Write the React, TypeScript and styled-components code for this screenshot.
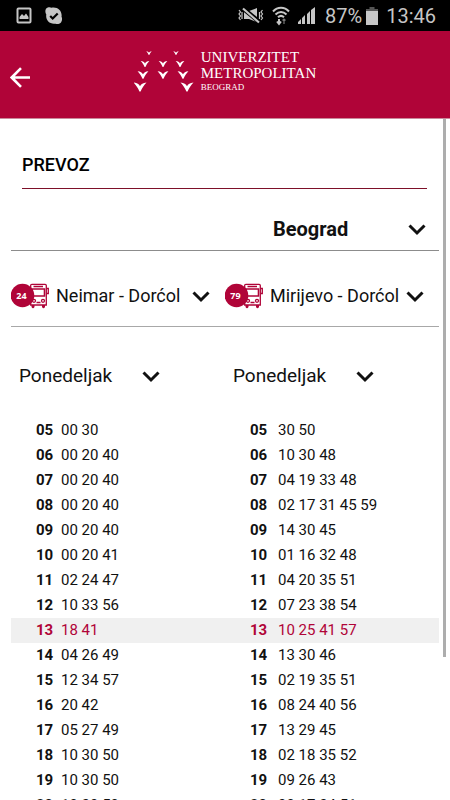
import React from "react";
import styled, { createGlobalStyle } from "styled-components";

const crimson = "#b00438";

const GlobalStyle = createGlobalStyle`
  * { box-sizing: border-box; }
  body {
    margin: 0;
    background: #fff;
    color: #111;
    font-family: Roboto, "Liberation Sans", sans-serif;
  }
`;

const Screen = styled.div`
  display: flex;
  flex-direction: column;
  height: 100vh;
  overflow: hidden;
`;

const StatusBar = styled.div`
  flex: none;
  display: flex;
  align-items: center;
  justify-content: space-between;
  height: 31px;
  padding: 0 14px 0 16px;
  background: #000;
  color: #c6c6c6;
  font-size: 20px;
  line-height: 24px;
`;

const StatusGroup = styled.div<{ $gap: number }>`
  display: flex;
  align-items: center;
  gap: ${(p) => p.$gap}px;
`;

const Clock = styled.time`
  margin-left: 4px;
`;

const Header = styled.header`
  flex: none;
  display: grid;
  grid-template-columns: 1fr auto 1fr;
  align-items: center;
  height: 88px;
  padding: 0 10px;
  background: ${crimson};
  border-bottom: 1px solid #c98a9b;
  color: #fff;
`;

const BackButton = styled.button`
  display: flex;
  justify-self: start;
  margin-top: 6px;
  padding: 0;
  border: 0;
  background: none;
  color: inherit;
`;

const Brand = styled.div`
  display: flex;
  align-items: center;
  gap: 7px;
  margin-bottom: 8px;
`;

const BrandText = styled.div`
  display: flex;
  flex-direction: column;
  color: #fff;
  font-family: "Liberation Serif", serif;
  font-size: 15px;
  line-height: 16px;
`;

const BrandCity = styled.span`
  font-size: 9px;
  line-height: 12px;
`;

const Body = styled.main`
  position: relative;
  flex: 1;
  min-height: 0;
`;

const Scroller = styled.div`
  height: 100%;
  padding: 0 11px;
  overflow-y: auto;
  scrollbar-width: none;
`;

const ScrollThumb = styled.div`
  position: absolute;
  top: 0;
  right: 4px;
  width: 3px;
  height: 79%;
  background: #adadad;
`;

const Title = styled.h1`
  margin: 0 12px 0 11px;
  padding: 34px 0 11px;
  border-bottom: 1px solid #7d1029;
  color: #000;
  font-size: 18px;
  font-weight: 500;
  line-height: 24px;
`;

const CityRow = styled.div`
  display: flex;
  align-items: center;
  justify-content: flex-end;
  height: 62px;
  padding: 18px 13px 0 0;
  border-bottom: 1px solid #8c8c8c;
`;

const Columns = styled.div<{ $height: number; $top: number; $ruled?: boolean }>`
  display: grid;
  grid-template-columns: 1fr 1fr;
  align-items: center;
  height: ${(p) => p.$height}px;
  padding-top: ${(p) => p.$top}px;
  border-bottom: ${(p) => (p.$ruled ? "1px solid #a8a8a8" : "0")};
`;

const Cell = styled.div<{ $inset?: number }>`
  display: flex;
  align-items: center;
  gap: 7px;
  padding-left: ${(p) => p.$inset ?? 0}px;
`;

const Field = styled.label<{ $width: number }>`
  display: grid;
  align-items: center;
  width: ${(p) => p.$width}px;

  > * { grid-area: 1 / 1; }
  > svg { justify-self: end; margin-top: 3px; pointer-events: none; }
`;

const Select = styled.select<{ $size: number; $bold?: boolean }>`
  appearance: none;
  width: 100%;
  margin: 0;
  padding: 0;
  border: 0;
  background: none;
  color: #111;
  font-family: inherit;
  font-size: ${(p) => p.$size}px;
  font-weight: ${(p) => (p.$bold ? 700 : 400)};
  line-height: 24px;
`;

const Timetable = styled.table`
  display: block;
  width: 100%;
  font-size: 15px;
  line-height: 25px;

  tbody { display: block; }
`;

const HourRow = styled.tr<{ $now: boolean }>`
  display: grid;
  grid-template-columns: 50px calc(50% - 50px) 53px 1fr;
  height: 25px;
  background: ${(p) => (p.$now ? "#f0f0f0" : "transparent")};
  color: ${(p) => (p.$now ? crimson : "#111")};
`;

const Hour = styled.th`
  padding: 0 0 0 25px;
  font-weight: 700;
  text-align: left;
`;

const Minutes = styled.td`
  padding: 0;
`;

const Chevron = () => (
  <svg width="18" height="12" viewBox="0 0 18 12" fill="none" stroke="#111" strokeWidth="3" aria-hidden="true">
    <path d="M1.500 1.500 9 9l7.500-7.500" />
  </svg>
);

const PictureIcon = () => (
  <svg width="16" height="17" viewBox="0 0 16 17" aria-hidden="true">
    <rect x="1.500" y="1.500" width="13" height="14" rx="1" fill="none" stroke="#c6c6c6" strokeWidth="2" />
    <path d="M3.500 12V10l2.500-3 2 2 2-2.500 2.500 3.500v2z" fill="#c6c6c6" />
  </svg>
);

const SkypeIcon = () => (
  <svg width="18" height="18" viewBox="0 0 18 18" aria-hidden="true">
    <path d="M1 1.800C3 0 5 0 6.500.8c6-1.300 11 3.200 10 9 .9 1.500.8 3.800-.5 5.700-1.800 1.700-3.800 2-5.500 1.200C4.500 17.700.3 13 1.300 7.500.2 5.500 0 3.500 1 1.800z" fill="#c6c6c6" />
    <path d="m5.200 9 2.500 2.500 5-5" fill="none" stroke="#000" strokeWidth="2.200" />
  </svg>
);

const MuteIcon = () => (
  <svg width="26" height="18" viewBox="0 0 26 18" fill="none" stroke="#c6c6c6" aria-hidden="true">
    <path d="M6 4h5l8-3v14l-8-3H6z" fill="#c6c6c6" stroke="none" />
    <path d="m4.500 1 17 14" stroke="#000" strokeWidth="4.500" />
    <path d="m5 1.500 16 14" strokeWidth="2.200" />
    <path d="m1 3 1.500 2L1 7l1.500 2L1 11l1.500 2M24.500 3 23 5l1.500 2L23 9l1.500 2-1.500 2M4 5v7M21.500 5v7" strokeWidth="1.200" />
  </svg>
);

const WifiIcon = () => (
  <svg width="18" height="20" viewBox="0 0 18 20" fill="none" stroke="#c6c6c6" strokeWidth="2" aria-hidden="true">
    <path d="M1 5.500c4.500-5 11.500-5 16 0M3.500 8.500c3.500-3.500 7.500-3.500 11 0M6 11.300c2-1.900 4-1.900 6 0" />
    <path d="M7 13v5M5 15.500 7 18l2-2.500" />
    <path d="M12 18v-5M10.500 14.500 12 13l1.500 1.500" stroke="#777" strokeWidth="1.200" />
  </svg>
);

const SignalIcon = () => (
  <svg width="17" height="17" viewBox="0 0 17 17" fill="#c6c6c6" aria-hidden="true">
    <path d="M0 17v-2l3-3v5zM4 17v-6l3-3v9zM9 17V7l3-3v13zM13 17V3l4-3v17z" />
  </svg>
);

const BatteryIcon = () => (
  <svg width="12" height="18" viewBox="0 0 12 18" aria-hidden="true">
    <path d="M3.500 0h5v2H12v2H0V2h3.500z" fill="#555" />
    <path d="M0 4h12v14H0z" fill="#c6c6c6" />
  </svg>
);

const BackArrow = () => (
  <svg width="21" height="21" viewBox="0 0 21 21" fill="none" stroke="#fff" strokeWidth="2.600" aria-hidden="true">
    <path d="M20 10.500H2M11 1.200l-9.300 9.300 9.300 9.300" />
  </svg>
);

const birds: [number, number, number][] = [
  [15, 4, 5], [42, 4, 5],
  [11, 15, 8], [29, 15, 8], [46, 15, 8],
  [9, 26, 10], [29, 26, 10], [49, 26, 10],
  [6, 38, 12], [53, 38, 12],
];

const BirdsLogo = () => (
  <svg width="60" height="44" viewBox="0 0 60 44" fill="#fff" aria-hidden="true">
    {birds.map(([x, y, w]) => (
      <path
        key={`${x}-${y}`}
        transform={`translate(${x} ${y}) scale(${w / 12})`}
        d="M-6.500-4.500C-3-4.200-1-2.800 0-.8 1-2.800 3-4.200 6.500-4.500 4-2 2 1 .6 4.500h-1.200C-2 1-4-2-6.500-4.500z"
      />
    ))}
  </svg>
);

const BusIcon = ({ line }: { line: string }) => (
  <svg width="38" height="26" viewBox="0 0 38 26" role="img" aria-label={`Linija ${line}`}>
    <g fill="none" stroke={crimson} strokeWidth="1.300">
      <path d="M19.700 22V2.500q0-1.200 1.200-1.200h13.200q1.200 0 1.200 1.200V22z" />
      <path d="M21 6h12.500v7H21z" strokeWidth="1.600" />
      <path d="M22.500 3.500h9.500M35.500 5.500h1.800v5h-1.500M25.500 19.500h4" />
      <circle cx="23" cy="17.800" r="1.500" />
      <circle cx="32" cy="17.800" r="1.500" />
    </g>
    <path d="M20.500 22h3v2q-1.500 2.500-3 0zM31 22h3v2q-1.500 2.500-3 0z" fill={crimson} />
    <circle cx="11.500" cy="12.500" r="11.800" fill={crimson} />
    <text x="10.500" y="16" fill="#fff" fontFamily="'Open Sans', sans-serif" fontSize="9" fontWeight="700" textAnchor="middle">
      {line}
    </text>
  </svg>
);

interface DropdownProps {
  label: string;
  value: string;
  width: number;
  size: number;
  bold?: boolean;
}

const Dropdown = ({ label, value, width, size, bold }: DropdownProps) => (
  <Field $width={width}>
    <Select aria-label={label} defaultValue={value} $size={size} $bold={bold}>
      <option>{value}</option>
    </Select>
    <Chevron />
  </Field>
);

const departures: [string, string, string][] = [
  ["05", "00 30", "30 50"],
  ["06", "00 20 40", "10 30 48"],
  ["07", "00 20 40", "04 19 33 48"],
  ["08", "00 20 40", "02 17 31 45 59"],
  ["09", "00 20 40", "14 30 45"],
  ["10", "00 20 41", "01 16 32 48"],
  ["11", "02 24 47", "04 20 35 51"],
  ["12", "10 33 56", "07 23 38 54"],
  ["13", "18 41", "10 25 41 57"],
  ["14", "04 26 49", "13 30 46"],
  ["15", "12 34 57", "02 19 35 51"],
  ["16", "20 42", "08 24 40 56"],
  ["17", "05 27 49", "13 29 45"],
  ["18", "10 30 50", "02 18 35 52"],
  ["19", "10 30 50", "09 26 43"],
  ["20", "10 30 50", "00 17 34 51"],
];

export default function App() {
  return (
    <Screen>
      <GlobalStyle />
      <StatusBar>
        <StatusGroup $gap={13}>
          <PictureIcon />
          <SkypeIcon />
        </StatusGroup>
        <StatusGroup $gap={10}>
          <StatusGroup $gap={8}>
            <MuteIcon />
            <WifiIcon />
            <SignalIcon />
          </StatusGroup>
          <StatusGroup $gap={4}>
            <span>87%</span>
            <BatteryIcon />
            <Clock>13:46</Clock>
          </StatusGroup>
        </StatusGroup>
      </StatusBar>
      <Header>
        <BackButton type="button" aria-label="Nazad">
          <BackArrow />
        </BackButton>
        <Brand>
          <BirdsLogo />
          <BrandText>
            <span>UNIVERZITET</span>
            <span>METROPOLITAN</span>
            <BrandCity>BEOGRAD</BrandCity>
          </BrandText>
        </Brand>
      </Header>
      <Body>
        <Scroller>
          <Title>PREVOZ</Title>
          <CityRow>
            <Dropdown label="Grad" value="Beograd" width={153} size={20} bold />
          </CityRow>
          <Columns $height={76} $top={14} $ruled>
            <Cell>
              <BusIcon line="24" />
              <Dropdown label="Linija 24" value="Neimar - Dorćol" width={154} size={18} />
            </Cell>
            <Cell>
              <BusIcon line="79" />
              <Dropdown label="Linija 79" value="Mirijevo - Dorćol" width={154} size={18} />
            </Cell>
          </Columns>
          <Columns $height={91} $top={6}>
            <Cell $inset={8}>
              <Dropdown label="Dan, linija 24" value="Ponedeljak" width={141} size={19} />
            </Cell>
            <Cell $inset={8}>
              <Dropdown label="Dan, linija 79" value="Ponedeljak" width={141} size={19} />
            </Cell>
          </Columns>
          <Timetable>
            <tbody>
              {departures.map(([hour, left, right]) => (
                <HourRow key={hour} $now={hour === "13"}>
                  <Hour scope="row">{hour}</Hour>
                  <Minutes>{left}</Minutes>
                  <Hour>{hour}</Hour>
                  <Minutes>{right}</Minutes>
                </HourRow>
              ))}
            </tbody>
          </Timetable>
        </Scroller>
        <ScrollThumb aria-hidden="true" />
      </Body>
    </Screen>
  );
}
